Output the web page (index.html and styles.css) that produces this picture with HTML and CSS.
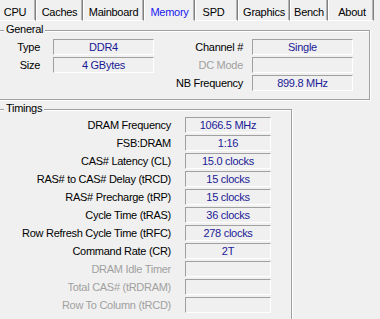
FILE: index.html
```html
<!DOCTYPE html>
<html>
<head>
<meta charset="utf-8">
<title>CPU-Z Memory</title>
<link rel="stylesheet" href="styles.css">
</head>
<body>
<nav class="tabs">
  <div class="tab t-cpu">CPU</div>
  <div class="tab t-caches">Caches</div>
  <div class="tab t-mb">Mainboard</div>
  <div class="tab t-mem active">Memory</div>
  <div class="tab t-spd">SPD</div>
  <div class="tab t-gfx">Graphics</div>
  <div class="tab t-bench">Bench</div>
  <div class="tab t-about">About</div>
</nav>

<section class="group general">
  <span class="legend">General</span>
  <div class="grid-general">
    <span class="lbl l1">Type</span><span class="val">DDR4</span><span class="lbl l2">Channel #</span><span class="val">Single</span>
    <span class="lbl l1">Size</span><span class="val">4 GBytes</span><span class="lbl l2 dis">DC Mode</span><span class="val"></span>
    <span class="lbl l1"></span><span class="spacer"></span><span class="lbl l2">NB Frequency</span><span class="val">899.8 MHz</span>
  </div>
</section>

<section class="group timings">
  <span class="legend">Timings</span>
  <div class="grid-timings">
    <span class="lbl">DRAM Frequency</span><span class="val">1066.5 MHz</span>
    <span class="lbl">FSB:DRAM</span><span class="val">1:16</span>
    <span class="lbl">CAS# Latency (CL)</span><span class="val">15.0 clocks</span>
    <span class="lbl">RAS# to CAS# Delay (tRCD)</span><span class="val">15 clocks</span>
    <span class="lbl">RAS# Precharge (tRP)</span><span class="val">15 clocks</span>
    <span class="lbl">Cycle Time (tRAS)</span><span class="val">36 clocks</span>
    <span class="lbl">Row Refresh Cycle Time (tRFC)</span><span class="val">278 clocks</span>
    <span class="lbl">Command Rate (CR)</span><span class="val">2T</span>
    <span class="lbl dis">DRAM Idle Timer</span><span class="val"></span>
    <span class="lbl dis">Total CAS# (tRDRAM)</span><span class="val"></span>
    <span class="lbl dis">Row To Column (tRCD)</span><span class="val"></span>
  </div>
</section>
</body>
</html>
```

FILE: styles.css
```css
html, body {
  margin: 0;
  height: 100%;
  overflow: hidden;
}

body {
  width: 380px;
  background: #f0f0f0;
  font-family: "Liberation Sans", Arial, sans-serif;
  font-size: 11px;
  letter-spacing: -0.28px;
  color: #000;
}

/* ---------- tabs ---------- */
.tabs {
  display: flex;
  height: 21px;
}

.tab {
  box-sizing: border-box;
  height: 21px;
  padding-top: 6px;
  line-height: 13px;
  text-align: center;
  white-space: nowrap;
  border-left: 1px solid #fff;
  border-right: 1px solid #808080;
  border-bottom: 1px solid #fff;
  box-shadow: inset -1px 0 #b4b4b4;
}

.tab.active {
  color: #1818f0;
  border-bottom-color: #f0f0f0;
}

.t-cpu { width: 42px; margin-left: -6px; }
.t-caches { width: 47px; }
.t-mb { width: 61px; }
.t-mem { width: 51px; }
.t-spd { width: 43px; padding-right: 6px; }
.t-gfx { width: 52px; }
.t-bench { width: 38px; }
.t-about { width: 46px; padding-left: 2px; }

/* ---------- group boxes ---------- */
.group {
  position: relative;
  box-sizing: border-box;
  border: 1px solid #a0a0a0;
  box-shadow: inset 1px 1px #fff, 1px 1px #fff;
}

.legend {
  position: absolute;
  top: -8px;
  left: 5px;
  padding: 0 2px;
  line-height: 13px;
  background: #f0f0f0;
}

.general {
  margin: 9px 10px 0 -2px;
  padding: 8px 0;
}

.timings {
  width: 294px;
  margin: 9px 0 0 -2px;
  padding: 7px 0 12px;
}

/* ---------- rows ---------- */
.grid-general {
  display: grid;
  grid-template-columns: 54px 101px 98px 101px;
  grid-auto-rows: 16px;
  row-gap: 2px;
}

.grid-timings {
  display: grid;
  grid-template-columns: 186px 86px;
  grid-auto-rows: 16px;
  row-gap: 2px;
}

.lbl {
  text-align: right;
  line-height: 16px;
  white-space: nowrap;
}

.l1 { padding-right: 13px; }
.l2 { padding-right: 9px; }
.grid-timings .lbl { padding-right: 14px; }

.dis { color: #a0a0a0; }

.val {
  box-sizing: border-box;
  height: 16px;
  line-height: 14px;
  text-align: center;
  color: #1a1a96;
  white-space: nowrap;
  border-top: 1px solid #a0a0a0;
  border-left: 1px solid #a0a0a0;
  border-bottom: 1px solid #fff;
  border-right: 1px solid #fff;
}
```
